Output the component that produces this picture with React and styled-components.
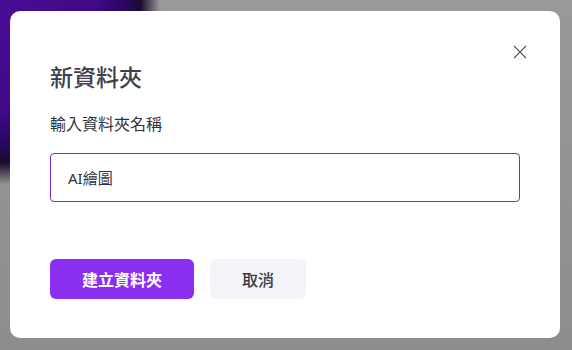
import styled, { createGlobalStyle } from "styled-components";

const GlobalStyle = createGlobalStyle`
  html, body {
    margin: 0;
    padding: 0;
  }

  body {
    font-family: "Noto Sans", "Noto Sans CJK TC", sans-serif;
  }
`;

const Backdrop = styled.div`
  width: 572px;
  height: 350px;
  box-sizing: border-box;
  padding: 11px 12px 12px 10px;
  background:
    radial-gradient(ellipse 160px 185px at 0 0, #4a0c96 0%, #3f0a86 60%, #2a0660 78%, rgba(20, 4, 40, 0.95) 88%, rgba(40, 20, 60, 0) 100%),
    linear-gradient(180deg, #999999 0%, #8d8d8d 100%);
  overflow: hidden;
`;

const Modal = styled.div`
  position: relative;
  width: 550px;
  height: 327px;
  box-sizing: border-box;
  padding: 51px 40px 0 40px;
  background: #ffffff;
  border-radius: 10px;
  display: flex;
  flex-direction: column;
`;

const CloseButton = styled.button`
  position: absolute;
  top: 31px;
  right: 30px;
  width: 20px;
  height: 20px;
  padding: 0;
  border: none;
  background: transparent;
  display: flex;
  align-items: center;
  justify-content: center;
  cursor: pointer;
`;

const Title = styled.h2`
  margin: 0;
  font-size: 23px;
  line-height: 30px;
  font-weight: 500;
  color: #40404c;
`;

const Label = styled.label`
  margin-top: 22px;
  font-size: 16px;
  line-height: 21px;
  color: #333340;
`;

const Input = styled.input`
  margin-top: 18px;
  width: 100%;
  height: 49px;
  box-sizing: border-box;
  padding: 0 17px;
  border: 1px solid #7b2bc4;
  border-radius: 4px;
  font-family: "Noto Sans", "Noto Sans CJK TC", sans-serif;
  font-size: 15px;
  color: #333340;
  outline: none;
`;

const Actions = styled.div`
  margin-top: 57px;
  display: flex;
  gap: 16px;
`;

const Button = styled.button`
  height: 40px;
  width: ${(p) => (p.$primary ? "144px" : "96px")};
  border: none;
  border-radius: 6px;
  background: ${(p) => (p.$primary ? "#8a2ff0" : "#f4f4f8")};
  color: ${(p) => (p.$primary ? "#ffffff" : "#3b3b48")};
  font-family: "Noto Sans", "Noto Sans CJK TC", sans-serif;
  font-size: 16px;
  font-weight: ${(p) => (p.$primary ? 700 : 500)};
  cursor: pointer;
`;

const App = () => {
  return (
    <>
      <GlobalStyle />
      <Backdrop>
        <Modal>
          <CloseButton aria-label="close">
            <svg width="14" height="14" viewBox="0 0 14 14">
              <path d="M1 1 L13 13 M13 1 L1 13" stroke="#5a5a66" strokeWidth="1.2" />
            </svg>
          </CloseButton>
          <Title>新資料夾</Title>
          <Label>輸入資料夾名稱</Label>
          <Input defaultValue="AI繪圖" />
          <Actions>
            <Button $primary>建立資料夾</Button>
            <Button>取消</Button>
          </Actions>
        </Modal>
      </Backdrop>
    </>
  );
};

export default App;
